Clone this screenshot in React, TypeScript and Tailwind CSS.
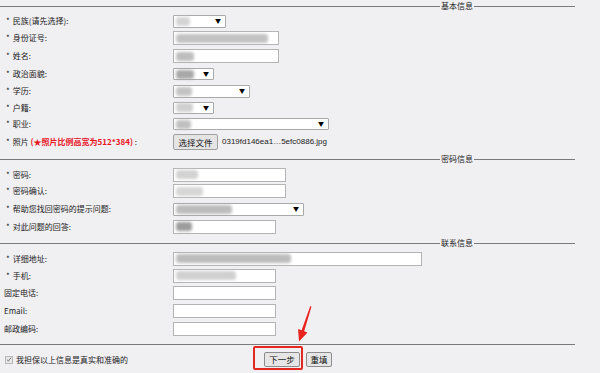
const font = "font-['Noto_Sans_CJK_SC','Liberation_Sans',sans-serif]";

function Blob({ w, tone = "bg-[#c8c8c8]" }: { w: string; tone?: string }) {
  return <span className={`ml-[2px] h-[9px] ${w} ${tone} blur-[1.5px] rounded-[3px]`} />;
}

function Select({ w, h = "h-[13px]", blob }: { w: string; h?: string; blob?: React.ReactNode }) {
  return (
    <div className={`${w} ${h} flex items-center bg-white border border-[#a9a9a9] rounded-[1px]`}>
      {blob}
      <span className="ml-auto mr-[4px] text-[6px] leading-none text-black">▼</span>
    </div>
  );
}

function Input({ w, blob }: { w: string; blob?: React.ReactNode }) {
  return (
    <div className={`${w} h-[14px] flex items-center bg-white border border-[#b4b4b4]`}>{blob}</div>
  );
}

function Row({ h, label, star = true, children }: { h: string; label: React.ReactNode; star?: boolean; children?: React.ReactNode }) {
  return (
    <div className={`${h} grid grid-cols-[173px_1fr] items-center`}>
      <div className={`${star ? "pl-[6px]" : "pl-[4px]"} text-[8px] leading-none text-[#222]`}>
        {star && <span className="mr-[3px]">*</span>}
        {label}
      </div>
      <div className="flex items-center">{children}</div>
    </div>
  );
}

function Divider({ h, title }: { h: string; title?: string }) {
  return (
    <div className={`${h} flex items-center`}>
      {title ? (
        <>
          <div className="flex-1 h-px bg-[#7a7a7a]" />
          <span className="px-[1px] text-[8px] leading-none text-[#222]">{title}</span>
          <div className="w-[101px] h-px bg-[#7a7a7a]" />
        </>
      ) : (
        <div className="flex-1 h-px bg-[#7a7a7a]" />
      )}
    </div>
  );
}

export default function App() {
  return (
    <div className={`relative w-[600px] h-[373px] overflow-hidden bg-[#f0eff2] ${font}`}>
      <div className="w-[575px]">
        <Divider h="h-[12.5px]" title="基本信息" />
        <Row h="h-[17px]" label="民族(请先选择):">
          <Select w="w-[53px]" blob={<Blob w="w-[14px]" tone="bg-[#d4d4d4]" />} />
        </Row>
        <Row h="h-[17.5px]" label="身份证号:">
          <Input w="w-[106px]" blob={<Blob w="w-[92px]" tone="bg-[#c2c2c2]" />} />
        </Row>
        <Row h="h-[18px]" label="姓名:">
          <Input w="w-[106px]" blob={<Blob w="w-[18px]" tone="bg-[#bdbdbd]" />} />
        </Row>
        <Row h="h-[18px]" label="政治面貌:">
          <Select w="w-[41px]" h="h-[12px]" blob={<Blob w="w-[18px]" tone="bg-[#a8a8a8]" />} />
        </Row>
        <Row h="h-[16.5px]" label="学历:">
          <Select w="w-[77px]" blob={<Blob w="w-[16px]" tone="bg-[#c4c4c4]" />} />
        </Row>
        <Row h="h-[16px]" label="户籍:">
          <Select w="w-[41px]" h="h-[12px]" blob={<Blob w="w-[17px]" tone="bg-[#d0d0d0]" />} />
        </Row>
        <Row h="h-[17.5px]" label="职业:">
          <Select w="w-[156px]" h="h-[12px]" blob={<Blob w="w-[15px]" tone="bg-[#c0c0c0]" />} />
        </Row>
        <Row
          h="h-[18px]"
          label={
            <>
              照片 <span className="text-[#e8141e] font-bold">(★照片比例高宽为512*384)</span> :
            </>
          }
        >
          <button className="w-[45px] h-[16px] bg-[#e4e4e4] border border-[#a0a0a0] rounded-[2px] text-[8.5px] leading-none text-[#111]">
            选择文件
          </button>
          <span className="ml-[4px] text-[8px] text-[#222] font-['Liberation_Sans',sans-serif]">0319fd146ea1…5efc0886.jpg</span>
        </Row>

        <Divider h="h-[16px]" title="密码信息" />
        <Row h="h-[15.5px]" label="密码:">
          <Input w="w-[113px]" blob={<Blob w="w-[22px]" tone="bg-[#d2d2d2]" />} />
        </Row>
        <Row h="h-[17.75px]" label="密码确认:">
          <Input w="w-[113px]" blob={<Blob w="w-[27px]" tone="bg-[#d6d6d6]" />} />
        </Row>
        <Row h="h-[17.75px]" label="帮助您找回密码的提示问题:">
          <Select w="w-[131px]" blob={<Blob w="w-[56px]" tone="bg-[#bcbcbc]" />} />
        </Row>
        <Row h="h-[17px]" label="对此问题的回答:">
          <Input w="w-[103px]" blob={<Blob w="w-[16px]" tone="bg-[#9c9c9c]" />} />
        </Row>

        <Divider h="h-[16px]" title="联系信息" />
        <Row h="h-[15.75px]" label="详细地址:">
          <Input w="w-[249px]" blob={<Blob w="w-[115px]" tone="bg-[#bcbcbc]" />} />
        </Row>
        <Row h="h-[17.75px]" label="手机:">
          <Input w="w-[103px]" blob={<Blob w="w-[60px]" tone="bg-[#d0d0d0]" />} />
        </Row>
        <Row h="h-[17.5px]" star={false} label="固定电话:">
          <Input w="w-[103px]" />
        </Row>
        <Row h="h-[17.75px]" star={false} label="Email:">
          <Input w="w-[103px]" />
        </Row>
        <Row h="h-[17.5px]" star={false} label="邮政编码:">
          <Input w="w-[103px]" />
        </Row>

        <Divider h="h-[13.5px]" />
        <div className="h-[17.5px] flex items-center">
          <div className="w-[264px] flex items-center pl-[5px]">
            <span className="w-[8px] h-[8px] flex items-center justify-center bg-[#e8e8e8] border border-[#b8b8b8]">
              <svg viewBox="0 0 8 8" className="w-[7px] h-[7px]">
                <path d="M1.2 4.2 L3.2 6 L6.8 1.6" fill="none" stroke="#6a6a6a" strokeWidth="1.2" />
              </svg>
            </span>
            <span className="ml-[3px] text-[8px] leading-none text-[#222]">我担保以上信息是真实和准确的</span>
          </div>
          <button className="w-[36px] h-[15px] bg-[#e6e6e6] border border-[#8c8c8c] rounded-[2px] text-[8.5px] leading-none text-[#111]">
            下一步
          </button>
          <button className="ml-[6px] w-[26px] h-[15px] bg-[#e6e6e6] border border-[#8c8c8c] rounded-[2px] text-[8.5px] leading-none text-[#111]">
            重填
          </button>
        </div>
      </div>

      <div className="absolute left-[253px] top-[346px] w-[50px] h-[24px] border-2 border-[#e5281f] rounded-[2px]" />
      <svg className="absolute left-0 top-0 w-[600px] h-[373px] pointer-events-none" viewBox="0 0 600 373">
        <polygon
          points="311.5,306.5 310.2,306.3 301.6,330.2 298.1,329 299,341.5 307.5,332.4 304.2,331.2"
          fill="#e8231f"
        />
      </svg>
    </div>
  );
}
